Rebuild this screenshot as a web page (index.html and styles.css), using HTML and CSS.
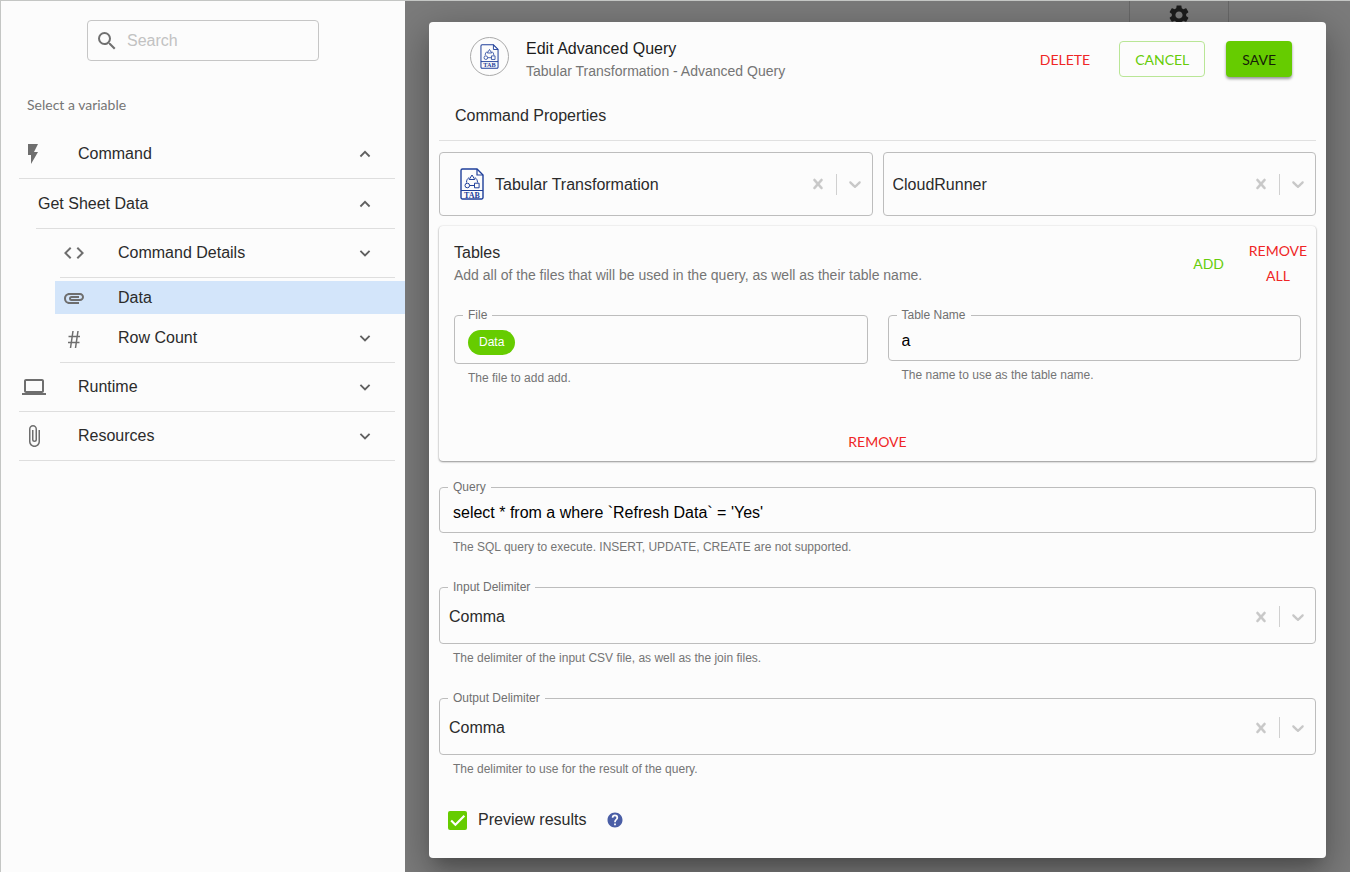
FILE: index.html
```html
<!DOCTYPE html>
<html lang="en">
<head>
<meta charset="utf-8">
<meta name="viewport" content="width=device-width, initial-scale=1">
<title>Edit Advanced Query</title>
<link rel="stylesheet" href="styles.css">
</head>
<body>
<svg class="sprite" aria-hidden="true">
  <symbol id="up" viewBox="0 0 24 24"><path d="M6.500 15l5.500-5.500 5.500 5.500" fill="none" stroke="currentColor" stroke-width="2.200"/></symbol>
  <symbol id="down" viewBox="0 0 24 24"><path d="M6.500 9.500l5.500 5.500 5.500-5.500" fill="none" stroke="currentColor" stroke-width="2.200"/></symbol>
  <symbol id="clear" viewBox="0 0 20 20"><path d="M14.348 14.849c-0.469 0.469-1.229 0.469-1.697 0l-2.651-3.030-2.651 3.029c-0.469 0.469-1.229 0.469-1.697 0-0.469-0.469-0.469-1.229 0-1.697l2.758-3.150-2.759-3.152c-0.469-0.469-0.469-1.228 0-1.697s1.228-0.469 1.697 0l2.652 3.031 2.651-3.031c0.469-0.469 1.228-0.469 1.697 0s0.469 1.229 0 1.697l-2.758 3.152 2.758 3.150c0.469 0.469 0.469 1.229 0 1.698z" fill="currentColor" stroke="currentColor" stroke-width=".3"/></symbol>
  <symbol id="caret" viewBox="0 0 20 20"><path d="M4.516 7.548c0.436-0.446 1.043-0.481 1.576 0l3.908 3.747 3.908-3.747c0.533-0.481 1.141-0.446 1.574 0 0.436 0.445 0.408 1.197 0 1.615-0.406 0.418-4.695 4.502-4.695 4.502-0.217 0.223-0.502 0.335-0.787 0.335s-0.570-0.112-0.789-0.335c0 0-4.287-4.084-4.695-4.502s-0.436-1.170 0-1.615z" fill="currentColor"/></symbol>
  <symbol id="tab" viewBox="0 0 24 32">
    <g fill="none" stroke="#1f3f9a">
      <path d="M2.500 1H17l6 6v22.500a1.500 1.500 0 0 1-1.500 1.500h-19A1.500 1.500 0 0 1 1 29.500v-27A1.500 1.500 0 0 1 2.500 1z" stroke-width="1.400"/>
      <path d="M17 1v6h6M1 22.500h22" stroke-width="1.200"/>
      <path d="M12 7l2.800 4.500H9.200zM9.200 9.500C7.500 10.500 6.500 12 6.500 14.500M14.800 9.500c1.700 1 2.700 2.500 2.700 5M9.500 17.500h5"/>
      <circle cx="7.300" cy="17.500" r="2.300"/><path d="M14.500 15.200h4.600v4.600h-4.600z"/>
    </g>
  </symbol>
</svg>
<div class="page">
  <aside class="sidebar">
    <label class="search">
      <svg width="24" height="24" viewBox="0 0 24 24" aria-hidden="true"><path fill="currentColor" d="M15.500 14h-.79l-.28-.27A6.470 6.470 0 0 0 16 9.500 6.500 6.500 0 1 0 9.500 16c1.610 0 3.090-.59 4.230-1.570l.27.28v.79l5 4.990L20.490 19l-4.990-5zm-6 0C7.010 14 5 11.990 5 9.500S7.010 5 9.500 5 14 7.010 14 9.500 11.990 14 9.500 14z"/></svg>
      <input type="search" placeholder="Search" aria-label="Search">
    </label>
    <p class="hint">Select a variable</p>
    <nav class="tree">
      <button class="row" type="button">
        <svg class="lead" viewBox="0 0 24 24"><path fill="currentColor" d="M6 2v11h3v9l7-12h-4l4-8z"/></svg>
        <span>Command</span><svg class="chev"><use href="#up"/></svg>
      </button>
      <button class="row group" type="button">
        <span>Get Sheet Data</span><svg class="chev"><use href="#up"/></svg>
      </button>
      <button class="row child" type="button">
        <svg class="lead" viewBox="0 0 24 24"><path fill="currentColor" d="M9.400 16.600L4.800 12l4.600-4.600L8 6l-6 6 6 6 1.400-1.400zm5.200 0l4.600-4.600-4.600-4.600L16 6l6 6-6 6-1.400-1.400z"/></svg>
        <span>Command Details</span><svg class="chev"><use href="#down"/></svg>
      </button>
      <button class="row leaf" type="button" aria-current="true">
        <svg class="lead" viewBox="0 0 24 24"><path fill="currentColor" d="M2 12.500C2 9.460 4.460 7 7.500 7H18c2.210 0 4 1.790 4 4s-1.790 4-4 4H9.500a2.500 2.500 0 0 1 0-5H17v2H9.410c-.55 0-.55 1 0 1H18c1.100 0 2-.9 2-2s-.9-2-2-2H7.500a3.500 3.500 0 1 0 0 7H17v2H7.500C4.460 18 2 15.540 2 12.500z"/></svg>
        <span>Data</span>
      </button>
      <button class="row child" type="button">
        <svg class="lead" viewBox="0 0 24 24"><path fill="none" stroke="currentColor" stroke-width="1.500" d="M6.500 10.500H18M6 16.500h11.500M11 5L8.500 22M16 5l-2.500 17"/></svg>
        <span>Row Count</span><svg class="chev"><use href="#down"/></svg>
      </button>
      <button class="row" type="button">
        <svg class="lead" viewBox="0 0 24 24"><path fill="currentColor" d="M20 18c1.100 0 1.990-.9 1.990-2L22 6c0-1.100-.9-2-2-2H4c-1.100 0-2 .9-2 2v10c0 1.100.9 2 2 2H0v2h24v-2h-4zM4 6h16v10H4V6z"/></svg>
        <span>Runtime</span><svg class="chev"><use href="#down"/></svg>
      </button>
      <button class="row" type="button">
        <svg class="lead" viewBox="0 0 24 24"><path fill="currentColor" d="M16.500 6v11.500c0 2.210-1.790 4-4 4s-4-1.790-4-4V5a2.500 2.500 0 0 1 5 0v10.500c0 .55-.45 1-1 1s-1-.45-1-1V6H10v9.500a2.500 2.500 0 0 0 5 0V5c0-2.210-1.790-4-4-4S7 2.790 7 5v12.500c0 3.040 2.460 5.500 5.500 5.500s5.500-2.460 5.500-5.500V6h-1.500z"/></svg>
        <span>Resources</span><svg class="chev"><use href="#down"/></svg>
      </button>
    </nav>
  </aside>
  <main class="backdrop">
    <div class="behind">
      <svg width="24" height="24" viewBox="0 0 24 24" aria-hidden="true"><path fill="currentColor" d="M19.140 12.940c.04-.3.060-.61.060-.94 0-.32-.02-.64-.07-.94l2.030-1.580c.18-.14.230-.41.120-.61l-1.920-3.320c-.12-.22-.37-.29-.59-.22l-2.390.96c-.5-.38-1.030-.7-1.620-.94l-.36-2.540c-.04-.24-.24-.41-.48-.41h-3.840c-.24 0-.43.17-.47.410l-.36 2.540c-.59.240-1.130.570-1.620.940l-2.390-.96c-.22-.08-.47 0-.59.220L2.740 8.870c-.12.210-.08.470.120.610l2.030 1.580c-.05.300-.09.630-.09.940s.02.640.070.940l-2.030 1.580c-.18.140-.23.410-.12.610l1.920 3.320c.12.220.37.290.59.220l2.390-.96c.5.380 1.030.700 1.620.940l.36 2.540c.05.240.24.410.48.410h3.840c.24 0 .44-.17.470-.41l.36-2.540c.59-.24 1.130-.56 1.620-.94l2.390.96c.22.080.47 0 .59-.22l1.920-3.320c.12-.22.070-.47-.12-.61l-2.010-1.580zM12 15.600c-1.980 0-3.600-1.620-3.600-3.600s1.620-3.600 3.600-3.600 3.600 1.620 3.600 3.600-1.620 3.600-3.600 3.600z"/></svg>
    </div>
    <form class="panel">
      <header class="head">
        <span class="avatar"><svg width="19" height="25" viewBox="0 0 24 32"><use href="#tab" width="24" height="32"/><text x="12" y="29.500" text-anchor="middle" class="tab-text">TAB</text></svg></span>
        <div class="titles"><h1>Edit Advanced Query</h1><p>Tabular Transformation - Advanced Query</p></div>
        <button class="btn red" type="button">DELETE</button>
        <button class="btn outline" type="button">CANCEL</button>
        <button class="btn solid" type="button">SAVE</button>
      </header>
      <h2>Command Properties</h2>
      <div class="pair">
        <div class="select boxed with-icon">
          <svg width="26" height="32" viewBox="0 0 24 32"><use href="#tab" width="24" height="32"/><text x="12" y="29.500" text-anchor="middle" class="tab-text">TAB</text></svg>
          <select aria-label="Command type"><option>Tabular Transformation</option></select>
          <button class="clear" type="button" aria-label="Clear"><svg><use href="#clear"/></svg></button><i class="bar"></i><svg class="caret"><use href="#caret"/></svg>
        </div>
        <div class="select boxed">
          <select aria-label="Runner"><option>CloudRunner</option></select>
          <button class="clear" type="button" aria-label="Clear"><svg><use href="#clear"/></svg></button><i class="bar"></i><svg class="caret"><use href="#caret"/></svg>
        </div>
      </div>
      <section class="card">
        <div class="card-head">
          <div class="card-title"><h3>Tables</h3><p>Add all of the files that will be used in the query, as well as their table name.</p></div>
          <button class="btn green" type="button">ADD</button>
          <button class="btn red wrap" type="button">REMOVE ALL</button>
        </div>
        <div class="fields">
          <div>
            <fieldset class="outlined"><legend>File</legend><div class="chips"><span class="chip">Data</span></div></fieldset>
            <p class="help">The file to add add.</p>
          </div>
          <div>
            <fieldset class="outlined"><legend><label for="tname">Table Name</label></legend><input id="tname" type="text" value="a"></fieldset>
            <p class="help">The name to use as the table name.</p>
          </div>
        </div>
        <button class="btn red remove" type="button">REMOVE</button>
      </section>
      <div class="field">
        <fieldset class="outlined"><legend><label for="query">Query</label></legend><input id="query" type="text" value="select * from a where `Refresh Data` = 'Yes'"></fieldset>
        <p class="help">The SQL query to execute. INSERT, UPDATE, CREATE are not supported.</p>
      </div>
      <div class="field">
        <fieldset class="outlined"><legend><label for="ind">Input Delimiter</label></legend>
          <div class="select"><select id="ind"><option>Comma</option></select><button class="clear" type="button" aria-label="Clear"><svg><use href="#clear"/></svg></button><i class="bar"></i><svg class="caret"><use href="#caret"/></svg></div>
        </fieldset>
        <p class="help">The delimiter of the input CSV file, as well as the join files.</p>
      </div>
      <div class="field">
        <fieldset class="outlined"><legend><label for="outd">Output Delimiter</label></legend>
          <div class="select"><select id="outd"><option>Comma</option></select><button class="clear" type="button" aria-label="Clear"><svg><use href="#clear"/></svg></button><i class="bar"></i><svg class="caret"><use href="#caret"/></svg></div>
        </fieldset>
        <p class="help">The delimiter to use for the result of the query.</p>
      </div>
      <div class="preview">
        <span class="tick"><input id="prev" type="checkbox" checked><svg viewBox="0 0 18 18" aria-hidden="true"><path d="M3 9l4 4 8.500-8.500" fill="none" stroke="#fff" stroke-width="2"/></svg></span>
        <label for="prev">Preview results</label>
        <svg width="18" height="18" viewBox="0 0 24 24" aria-hidden="true"><path fill="#4a5ea6" d="M12 2C6.480 2 2 6.480 2 12s4.480 10 10 10 10-4.480 10-10S17.520 2 12 2zm1.200 17h-2.400v-2.200h2.400V19zm2-7.700l-.9.920c-.72.730-1.170 1.330-1.170 2.780h-2.250v-.5c0-1.100.45-2.100 1.170-2.830l1.240-1.260c.37-.36.590-.86.590-1.410a2 2 0 0 0-4 0H7.700a4.200 4.200 0 0 1 8.500 0c0 .88-.36 1.680-1 2.300z"/></svg>
      </div>
    </form>
  </main>
</div>
</body>
</html>
```
FILE: styles.css
```css
* { box-sizing: border-box; }
body, h1, h2, h3, p, fieldset, legend { margin: 0; padding: 0; font-weight: 400; }
body, input, select, button { font-family: "Liberation Sans", Arial, sans-serif; font-size: 16px; color: #2b2b2b; }
button { background: none; border: 0; padding: 0; cursor: pointer; }
svg { display: block; flex: none; }
.sprite { position: absolute; width: 0; height: 0; }
.tab-text { font: bold 8px "Liberation Serif", serif; fill: #1f3f9a; }

.page { display: grid; grid-template-columns: 404px 1fr; min-height: 100vh; border: 1px solid #c4c6c4; border-width: 1px 0 0 1px; }

.sidebar { background: #fcfcfc; padding-top: 19px; }
.search { display: flex; align-items: center; width: 232px; height: 41px; margin: 0 auto; padding: 0 7px; border: 1px solid #c6c6c6; border-radius: 4px; color: #707070; }
.search input { flex: 1; min-width: 0; margin-left: 8px; padding: 0; border: 0; outline: 0; background: none; }
.search input::placeholder { color: #c2c2c2; opacity: 1; }
.hint { margin: 34px 26px 15px; font: 14px/20px Lato, sans-serif; color: #757575; }
.tree { display: flex; flex-direction: column; }
.row { display: flex; align-items: center; height: 49px; margin: 0 10px 0 18px; padding-right: 20px; border-bottom: 1px solid #dedede; text-align: left; }
.row span { flex: 1; }
.lead { width: 24px; height: 24px; margin: 0 32px 0 3px; color: #6e6e6e; }
.chev { width: 20px; height: 20px; color: #606060; }
.group { margin-left: 35px; padding-left: 2px; height: 50px; }
.child { margin-left: 59px; }
.child .lead, .leaf .lead { margin-left: 2px; }
.leaf { height: 33px; margin: 3px 0 0 54px; padding-left: 5px; background: #d3e5fa; border: 0; }

.backdrop { position: relative; display: flex; padding: 21px 24px 14px; background: #7b7b7b; overflow: hidden; }
.behind { position: absolute; top: 0; right: 121px; width: 100px; height: 60px; padding-top: 2px; border: 1px solid #686868; border-width: 0 1px; display: flex; justify-content: center; color: #1c1c1c; }
.panel { position: relative; flex: 1; min-width: 0; padding: 15px 10px 24px; background: #fcfcfc; border-radius: 4px; box-shadow: 0 12px 15px -7px rgba(0,0,0,.2), 0 12px 38px 3px rgba(0,0,0,.3); }
.head { display: flex; align-items: center; gap: 21px; padding: 0 24px 0 31px; }
.avatar { display: flex; align-items: center; justify-content: center; align-self: flex-start; width: 39px; height: 39px; border: 1px solid #aaa; border-radius: 50%; }
.titles { flex: 1; margin-left: -4px; }
.titles h1 { font-size: 16px; line-height: 24px; color: #1c1c1c; }
.titles p, .card-title p { font-size: 14px; line-height: 20px; color: #757575; }
.btn { min-height: 36px; padding: 0 8px; border-radius: 4px; font: 14px/25px Lato, sans-serif; }
.red { color: #ef2626; }
.green { color: #66cc09; }
.outline { padding: 0 15px; border: 1px solid #b9e696; color: #66cc09; }
.solid { padding: 0 16px; background: #66cc00; color: #161e08; box-shadow: 0 2px 3px rgba(0,0,0,.4); }
h2 { margin-top: 23px; padding: 0 16px 12px; font-size: 16px; line-height: 24px; border-bottom: 1px solid #e0e0e0; }
.pair { display: grid; grid-template-columns: 1fr 1fr; gap: 10px; margin-top: 11px; }
.select { display: flex; align-items: center; height: 49px; }
.select select { flex: 1; min-width: 0; padding: 0; border: 0; outline: 0; appearance: none; background: none; color: #2b2b2b; }
.boxed { height: 64px; padding: 0 7px 0 9px; border: 1px solid #bdbdbd; border-radius: 4px; }
.with-icon { padding-left: 19px; }
.with-icon select { margin-left: 10px; }
.clear, .clear svg, .caret { width: 20px; height: 20px; color: #c8c8c8; }
.clear { margin-right: 8px; }
.bar { width: 1px; height: 21px; margin-right: 8px; background: #d0d0d0; }
.card { display: flex; flex-direction: column; margin-top: 10px; padding: 12px 15px 2px; border-radius: 4px; box-shadow: 0 1px 2px rgba(0,0,0,.4), 0 0 2px rgba(0,0,0,.12); }
.card-head { display: flex; align-items: center; margin-right: -15px; }
.card-title { flex: 1; }
.card-title h3 { font-size: 16px; line-height: 24px; }
.wrap { width: 76px; margin-left: 8px; }
.fields { display: grid; grid-template-columns: 1fr 1fr; gap: 20px; margin-top: 20px; }
.outlined { min-width: 0; padding: 0 8px; border: 1px solid #bdbdbd; border-radius: 4px; }
.outlined legend { padding: 0 5px; font-size: 12px; line-height: 14px; color: #707070; }
.outlined label { display: block; }
.outlined input { display: block; width: 100%; height: 38px; padding: 0 5px; border: 0; outline: 0; background: none; color: #000; }
.outlined .select { margin-right: -1px; padding: 0 0 4px 1px; }
.chips { display: flex; align-items: center; height: 41px; padding: 0 5px; }
.chip { padding: 0 11px; border-radius: 13px; font-size: 12px; line-height: 25px; color: #fff; background: #66cc00; }
.help { margin-top: 4px; padding: 0 14px; font-size: 12px; line-height: 20px; color: #757575; }
.remove { align-self: center; margin-top: 35px; }
.field { margin-top: 23px; }
.card + .field { margin-top: 19px; }
.preview { display: flex; align-items: center; margin-top: 29px; padding-left: 9px; line-height: 24px; }
.preview label { margin: 0 20px 0 11px; }
.tick { display: grid; width: 19px; height: 19px; }
.tick > * { grid-area: 1 / 1; }
.tick input { width: 19px; height: 19px; margin: 0; appearance: none; border-radius: 2px; }
.tick input:checked { background: #66cc00; }
.tick svg { pointer-events: none; width: 19px; height: 19px; }
```
